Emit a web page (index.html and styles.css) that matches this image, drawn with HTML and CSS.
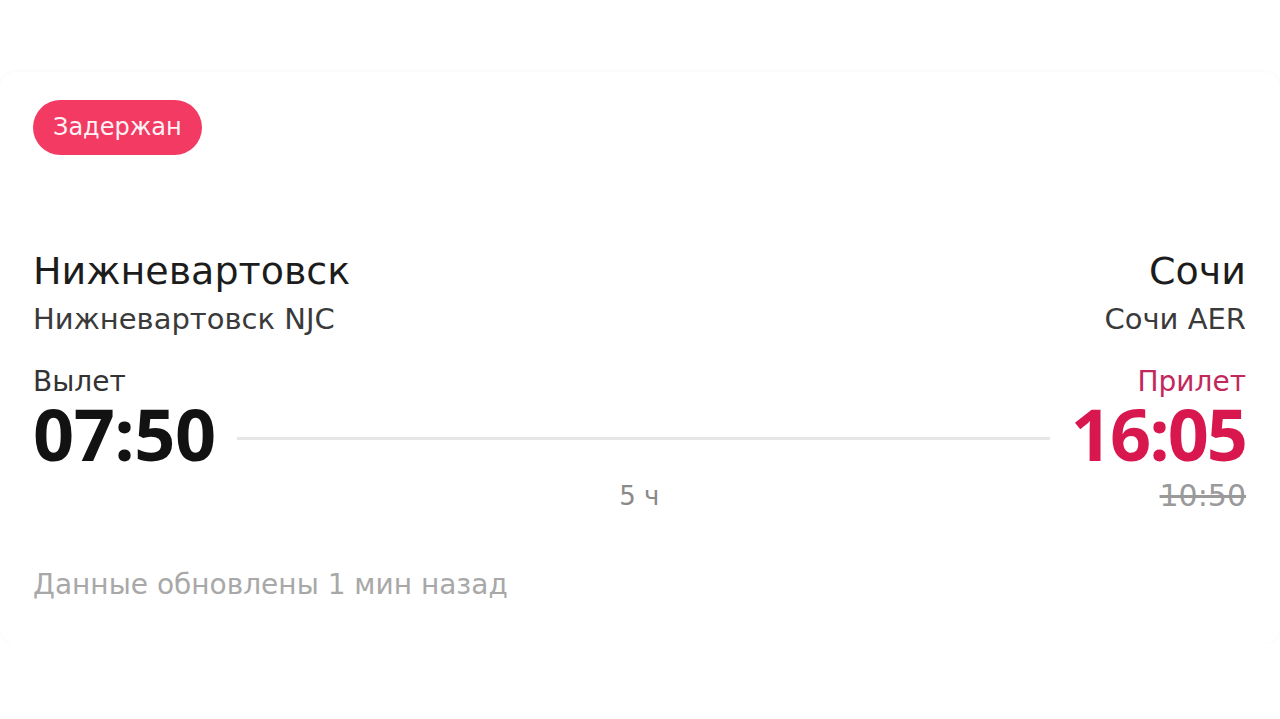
FILE: index.html
```html
<!DOCTYPE html>
<html lang="ru">
<head>
    <meta charset="UTF-8">
    <meta name="viewport" content="width=device-width, initial-scale=1.0">
    <title>Рейс Нижневартовск - Сочи</title>
    <link rel="stylesheet" href="styles.css">
</head>
<body>

    <!-- Карточка рейса -->
    <div class="flight-card">
        <span class="status">Задержан</span>

        <!-- Города и аэропорты -->
        <div class="places">
            <div class="place">
                <div class="city">Нижневартовск</div>
                <div class="airport">Нижневартовск NJC</div>
            </div>
            <div class="place place-right">
                <div class="city">Сочи</div>
                <div class="airport">Сочи AER</div>
            </div>
        </div>

        <!-- Время вылета и прилета -->
        <div class="times">
            <div class="label label-dep">Вылет</div>
            <div class="time time-dep">07:50</div>

            <div class="route-line"></div>
            <div class="duration">5 ч</div>

            <div class="label label-arr">Прилет</div>
            <div class="time time-arr">16:05</div>
            <div class="old-time">10:50</div>
        </div>

        <p class="updated">Данные обновлены 1 мин назад</p>
    </div>

</body>
</html>
```

FILE: styles.css
```css
/* Общие стили */
body {
    margin: 0;
    padding: 0;
    background-color: #ffffff;
    font-family: 'DejaVu Sans', 'Noto Sans', Arial, sans-serif;
    color: #1a1a1a;
}

/* Карточка */
.flight-card {
    margin-top: 72px;
    height: 571px;
    box-sizing: border-box;
    padding: 28px 34px 0 33px;
    background-color: #ffffff;
    border-radius: 16px;
    box-shadow: 0 0 4px rgba(150, 170, 180, 0.1);
}

/* Статус рейса */
.status {
    display: inline-block;
    height: 55px;
    line-height: 55px;
    padding: 0 20px;
    border-radius: 28px;
    background-color: #f23a62;
    color: #fff2f5;
    font-size: 24px;
}

/* Города */
.places {
    display: flex;
    justify-content: space-between;
    margin-top: 94px;
}

.place-right {
    text-align: right;
}

.city {
    font-size: 38px;
    line-height: 44px;
    color: #1c1c1c;
}

.airport {
    font-size: 29px;
    line-height: 34px;
    margin-top: 9px;
    color: #3a3a3a;
}

/* Блок времени */
.times {
    display: grid;
    grid-template-columns: auto 1fr auto;
    grid-template-rows: 33px 66px 50px;
    column-gap: 21px;
    margin-top: 31px;
}

.label {
    font-size: 28px;
    line-height: 30px;
    color: #333333;
}

.label-dep {
    grid-column: 1;
    grid-row: 1;
}

.label-arr {
    grid-column: 3;
    grid-row: 1;
    text-align: right;
    color: #c3285c;
}

.time {
    font-family: 'Open Sans', 'DejaVu Sans', sans-serif;
    font-size: 72px;
    font-weight: 700;
    line-height: 66px;
    letter-spacing: -0.5px;
    grid-row: 2;
}

.time-dep {
    grid-column: 1;
    color: #121212;
}

.time-arr {
    grid-column: 3;
    color: #d8174f;
    text-align: right;
    letter-spacing: -2px;
}

.route-line {
    grid-column: 2;
    grid-row: 2;
    align-self: center;
    margin-top: 10px;
    height: 3px;
    background-color: #e6e6e6;
}

.duration {
    grid-column: 2;
    grid-row: 3;
    padding: 10px 8px 0 0;
    text-align: center;
    font-size: 26px;
    line-height: 40px;
    color: #8a8a8a;
}

.old-time {
    grid-column: 3;
    grid-row: 3;
    padding-top: 10px;
    text-align: right;
    font-size: 30px;
    line-height: 40px;
    color: #9a9a9a;
    text-decoration: line-through;
}

/* Время обновления */
.updated {
    margin: 52px 0 0;
    font-size: 28px;
    line-height: 34px;
    color: #a8a8a8;
}
```
